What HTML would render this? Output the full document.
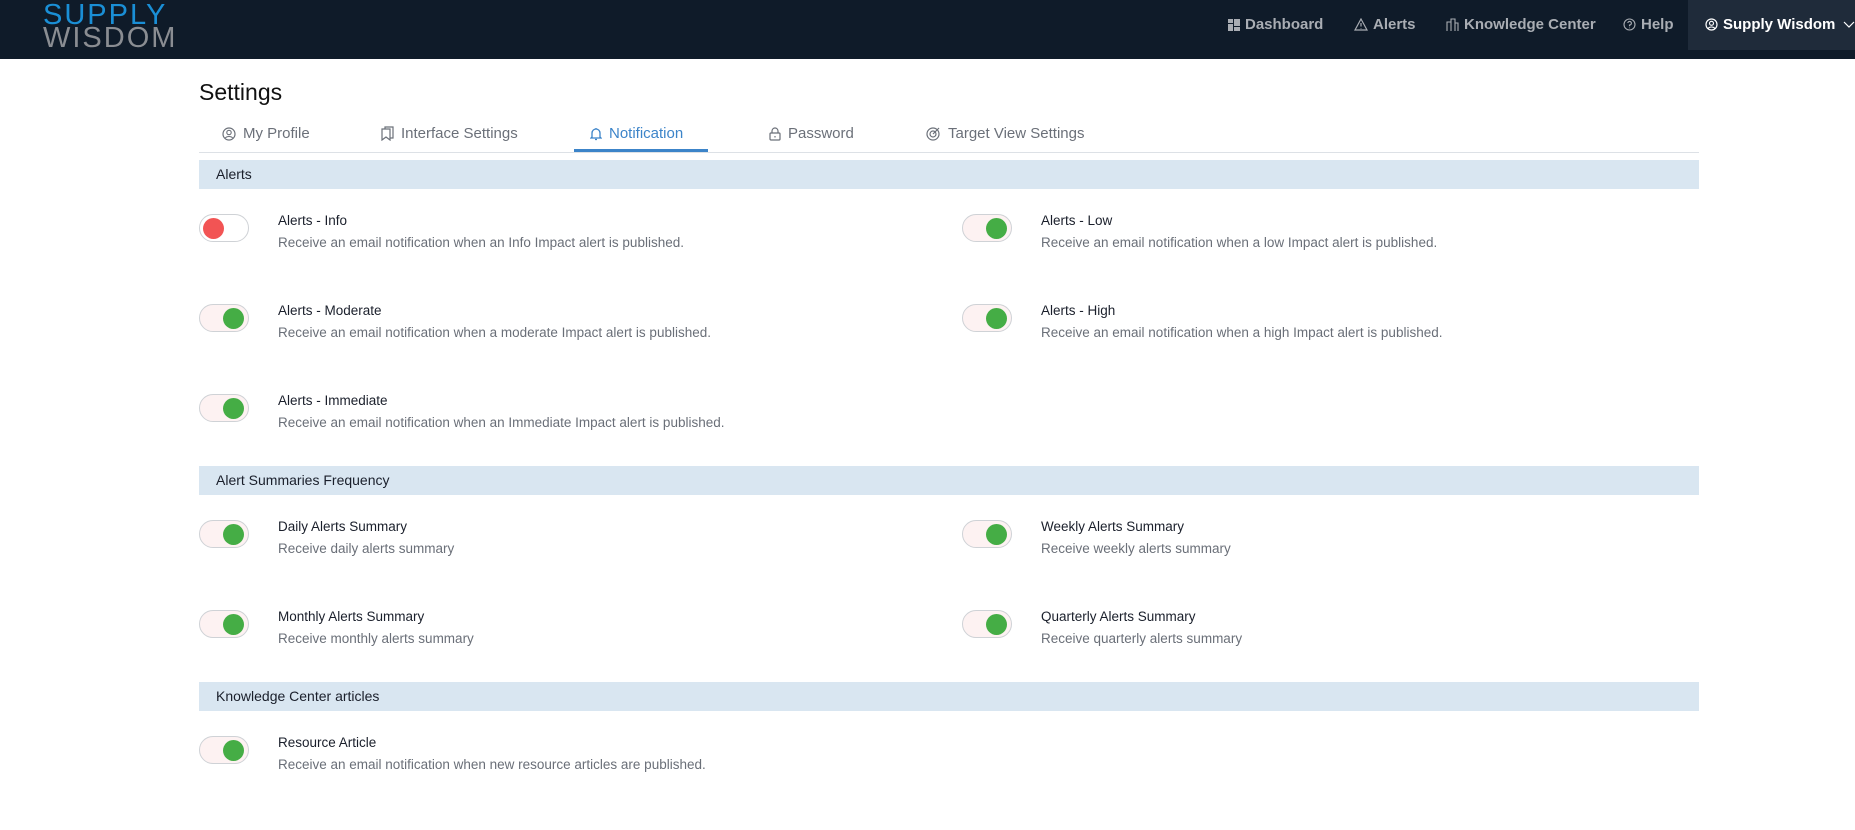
<!DOCTYPE html>
<html><head><meta charset="utf-8"><style>
*{box-sizing:border-box;margin:0;padding:0}
body{width:1855px;height:830px;background:#fff;font-family:"Liberation Sans",sans-serif;position:relative;overflow:hidden;color:#1a1f2b}
.hdr{position:absolute;left:0;top:0;width:1855px;height:59px;background:#0f1b29}
.logo{position:absolute;left:43px;top:4px;line-height:23px;font-size:29px;letter-spacing:2px;font-weight:400}
.logo .a{color:#1a8fd6}.logo .b{color:#8a8d92}
.nav{position:absolute;top:16px;font-size:15px;font-weight:700;color:#a9adb3;display:flex;align-items:center;gap:5px;white-space:nowrap}
.acct{position:absolute;left:1688px;top:0;width:167px;height:50px;background:#1f2b3a}
.acct span{position:absolute;left:17px;top:16px;font-size:15px;font-weight:700;color:#fff;display:flex;align-items:center;gap:5px;white-space:nowrap}
.title{position:absolute;left:199px;top:79px;font-size:23px;color:#111}
.tab{position:absolute;top:125px;font-size:15px;color:#6b7079;display:flex;align-items:center;gap:7px}
.tab.act{color:#3c84c9}
.uline{position:absolute;left:574px;top:149px;width:134px;height:3px;background:#3c84c9}
.line{position:absolute;left:199px;top:152px;width:1500px;height:1px;background:#dde1e6}
.bar{position:absolute;left:199px;width:1500px;height:29px;background:#d9e6f1;font-size:14px;color:#1a1f2b;padding:6px 17px}
.tg{position:absolute;width:50px;height:28px;border:1px solid #cfd2d6;border-radius:14px;background:#fdf2f2}
.tg i{position:absolute;top:3px;width:21px;height:21px;border-radius:50%;background:#45ad45;right:4px}
.tg.off{background:#fff}.tg.off i{left:3px;right:auto;background:#f25454}
.it{position:absolute;font-size:13px}
.it b{display:block;font-weight:400;color:#1a1f2b;font-size:13.5px}
.it p{margin-top:7px;color:#6a6f78;font-size:13.5px}
</style></head><body>
<div class="hdr">
<div class="logo"><div class="a">SUPPLY</div><div class="b">WISDOM</div></div>
<div class="nav" style="left:1228px"><svg width="12" height="12"><rect x="0" y="0" width="5" height="4" fill="#a9adb3"/><rect x="6" y="0" width="6" height="7" fill="#a9adb3"/><rect x="0" y="5" width="5" height="7" fill="#a9adb3"/><rect x="6" y="8" width="6" height="4" fill="#a9adb3"/></svg>Dashboard</div>
<div class="nav" style="left:1354px"><svg width="14" height="13"><path d="M7 1L13 12H1Z" fill="none" stroke="#a9adb3" stroke-width="1.2"/><path d="M7 5v3.5M7 10v.5" stroke="#a9adb3" stroke-width="1.2"/></svg>Alerts</div>
<div class="nav" style="left:1446px"><svg width="13" height="14"><path d="M1 13V4h4v9M5 13V1h4v12M9 13V5h3v8" fill="none" stroke="#a9adb3" stroke-width="1.1"/></svg>Knowledge Center</div>
<div class="nav" style="left:1623px"><svg width="13" height="13"><circle cx="6.5" cy="6.5" r="5.5" fill="none" stroke="#a9adb3" stroke-width="1.1"/><path d="M4.8 5a1.8 1.8 0 1 1 1.7 2v1.2M6.5 9.6v.6" fill="none" stroke="#a9adb3" stroke-width="1.1"/></svg>Help</div>
<div class="acct"><span><svg width="13" height="13"><circle cx="6.5" cy="6.5" r="5.5" fill="none" stroke="#fff" stroke-width="1.2"/><circle cx="6.5" cy="5.3" r="2" fill="none" stroke="#fff" stroke-width="1.1"/><path d="M3 10.5c1.5-2 5.5-2 7 0" fill="none" stroke="#fff" stroke-width="1.1"/></svg>Supply Wisdom <svg width="12" height="8" style="margin-left:3px"><path d="M1 1l5 5 5-5" fill="none" stroke="#fff" stroke-width="1.2"/></svg></span></div>
</div>
<div class="title">Settings</div>
<div class="tab" style="left:222px"><svg width="14" height="14"><circle cx="7" cy="7" r="6" fill="none" stroke="#6b7079" stroke-width="1.2"/><circle cx="7" cy="5.5" r="2.2" fill="none" stroke="#6b7079" stroke-width="1.1"/><path d="M3.3 11c1.6-2 5.8-2 7.4 0" fill="none" stroke="#6b7079" stroke-width="1.1"/></svg>My Profile</div>
<div class="tab" style="left:381px"><svg width="13" height="15"><path d="M1 3h8v11l-4-3-4 3zM4 3V1h8v11h-3" fill="none" stroke="#6b7079" stroke-width="1.2"/></svg>Interface Settings</div>
<div class="tab act" style="left:590px"><svg width="12" height="14"><path d="M2 10V6a4 4 0 0 1 8 0v4l1 1H1zM5 12.5h2M6 1v1" fill="none" stroke="#3c84c9" stroke-width="1.3"/></svg>Notification</div>
<div class="tab" style="left:769px"><svg width="12" height="14"><rect x="1" y="6" width="10" height="7" rx="1" fill="none" stroke="#6b7079" stroke-width="1.2"/><path d="M3 6V4a3 3 0 0 1 6 0v2M6 9v1.5" fill="none" stroke="#6b7079" stroke-width="1.2"/></svg>Password</div>
<div class="tab" style="left:926px"><svg width="15" height="15"><circle cx="7" cy="8" r="6" fill="none" stroke="#6b7079" stroke-width="1.2"/><circle cx="7" cy="8" r="3" fill="none" stroke="#6b7079" stroke-width="1.2"/><path d="M7 8L13 2" stroke="#6b7079" stroke-width="1.2"/></svg>Target View Settings</div>
<div class="uline"></div><div class="line"></div>

<div class="bar" style="top:160px">Alerts</div>
<div class="tg off" style="left:199px;top:214px"><i></i></div>
<div class="it" style="left:278px;top:213px"><b>Alerts - Info</b><p>Receive an email notification when an Info Impact alert is published.</p></div>
<div class="tg" style="left:962px;top:214px"><i></i></div>
<div class="it" style="left:1041px;top:213px"><b>Alerts - Low</b><p>Receive an email notification when a low Impact alert is published.</p></div>
<div class="tg" style="left:199px;top:304px"><i></i></div>
<div class="it" style="left:278px;top:303px"><b>Alerts - Moderate</b><p>Receive an email notification when a moderate Impact alert is published.</p></div>
<div class="tg" style="left:962px;top:304px"><i></i></div>
<div class="it" style="left:1041px;top:303px"><b>Alerts - High</b><p>Receive an email notification when a high Impact alert is published.</p></div>
<div class="tg" style="left:199px;top:394px"><i></i></div>
<div class="it" style="left:278px;top:393px"><b>Alerts - Immediate</b><p>Receive an email notification when an Immediate Impact alert is published.</p></div>

<div class="bar" style="top:466px">Alert Summaries Frequency</div>
<div class="tg" style="left:199px;top:520px"><i></i></div>
<div class="it" style="left:278px;top:519px"><b>Daily Alerts Summary</b><p>Receive daily alerts summary</p></div>
<div class="tg" style="left:962px;top:520px"><i></i></div>
<div class="it" style="left:1041px;top:519px"><b>Weekly Alerts Summary</b><p>Receive weekly alerts summary</p></div>
<div class="tg" style="left:199px;top:610px"><i></i></div>
<div class="it" style="left:278px;top:609px"><b>Monthly Alerts Summary</b><p>Receive monthly alerts summary</p></div>
<div class="tg" style="left:962px;top:610px"><i></i></div>
<div class="it" style="left:1041px;top:609px"><b>Quarterly Alerts Summary</b><p>Receive quarterly alerts summary</p></div>

<div class="bar" style="top:682px">Knowledge Center articles</div>
<div class="tg" style="left:199px;top:736px"><i></i></div>
<div class="it" style="left:278px;top:735px"><b>Resource Article</b><p>Receive an email notification when new resource articles are published.</p></div>
</body></html>
